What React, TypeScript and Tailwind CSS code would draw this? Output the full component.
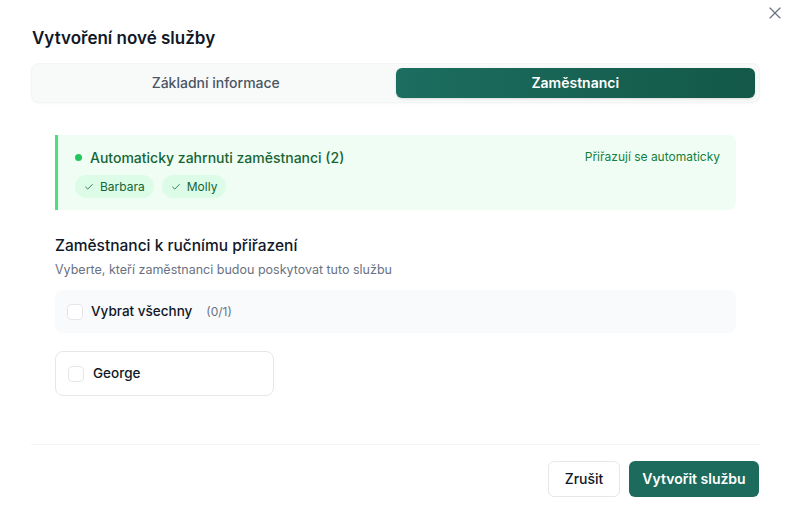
import { X, Check } from 'lucide-react';

const autoEmployees = ['Barbara', 'Molly'];
const manualEmployees = ['George'];

function Checkbox() {
  return <span className="block w-4 h-4 rounded-[4px] border border-gray-200 bg-white shrink-0" />;
}

export default function App() {
  return (
    <div className="relative w-[791px] h-[526px] bg-white text-gray-900 font-['Inter',sans-serif] px-[31px]">
      <button className="absolute top-[3px] right-[6px] text-gray-500">
        <X size={20} strokeWidth={1.4} />
      </button>

      <h2 className="pt-[24px] pl-px text-[17px] leading-7 font-semibold text-gray-900">Vytvoření nové služby</h2>

      {/* tabs */}
      <div className="mt-[11px] h-10 grid grid-cols-2 p-1 rounded-lg border border-gray-100 bg-[#f8fafa] shadow-[0_1px_2px_rgba(0,0,0,0.03)]">
        <button className="rounded-md text-sm font-medium text-gray-600">Základní informace</button>
        <button className="rounded-md text-sm font-semibold text-white bg-gradient-to-r from-[#1c6e60] to-[#135848] shadow-sm">
          Zaměstnanci
        </button>
      </div>

      <div className="px-6">
        {/* auto assigned */}
        <div className="mt-8 border-l-[3px] border-[#4ade80] bg-[#f0fdf4] rounded-r-lg pl-[17px] pr-4 pt-3 pb-3">
          <div className="flex items-center justify-between h-5">
            <div className="flex items-center gap-2">
              <span className="w-[7px] h-[7px] rounded-full bg-[#22c55e]" />
              <span className="text-[14px] font-medium text-[#166534]">Automaticky zahrnuti zaměstnanci (2)</span>
            </div>
            <span className="text-xs text-[#15803d]">Přiřazují se automaticky</span>
          </div>
          <div className="flex gap-2 mt-2">
            {autoEmployees.map((name) => (
              <span
                key={name}
                className="flex items-center gap-[6px] h-[23px] px-[9px] rounded-full bg-[#dcfce7] text-xs text-[#166534]"
              >
                <Check size={10} strokeWidth={2} />
                {name}
              </span>
            ))}
          </div>
        </div>

        {/* manual */}
        <h3 className="mt-6 text-[15.5px] leading-6 font-medium text-gray-900">Zaměstnanci k ručnímu přiřazení</h3>
        <p className="mt-[4px] text-[12.5px] leading-4 text-gray-500">Vyberte, kteří zaměstnanci budou poskytovat tuto službu</p>

        <div className="mt-[12px] h-[43px] flex items-center gap-2 px-3 rounded-lg bg-[#f8fafb]">
          <Checkbox />
          <span className="text-[13.5px] font-medium text-gray-900">Vybrat všechny</span>
          <span className="ml-[6px] text-xs text-gray-500">(0/1)</span>
        </div>

        <div className="mt-[18px] grid grid-cols-3 gap-3">
          {manualEmployees.map((name) => (
            <label key={name} className="h-[45px] flex items-center gap-[9px] px-3 rounded-lg border border-gray-200 bg-white">
              <Checkbox />
              <span className="text-[13.5px] font-medium text-gray-900">{name}</span>
            </label>
          ))}
        </div>
      </div>

      {/* footer */}
      <div className="mt-[48px] border-t border-gray-100 pt-4 pr-px flex justify-end gap-[9px]">
        <button className="h-9 w-[72px] rounded-md border border-gray-200 bg-white text-sm font-medium text-gray-900">
          Zrušit
        </button>
        <button className="h-9 w-[130px] whitespace-nowrap rounded-md bg-[#1d6b5c] text-sm font-semibold text-white">
          Vytvořit službu
        </button>
      </div>
    </div>
  );
}
